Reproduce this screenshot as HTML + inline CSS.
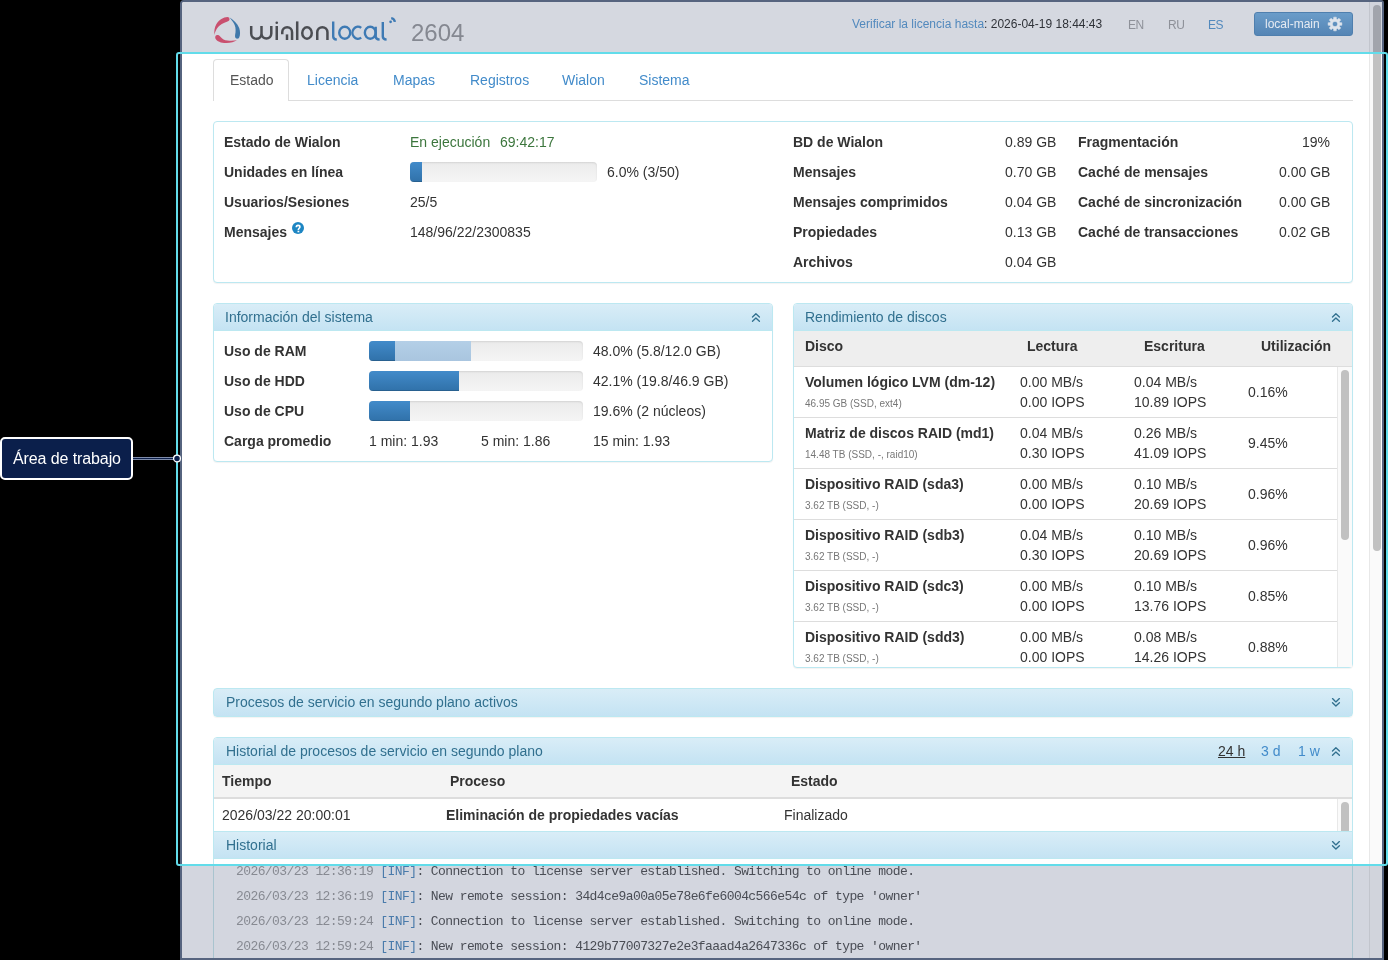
<!DOCTYPE html>
<html><head><meta charset="utf-8">
<style>
*{box-sizing:border-box}
html,body{margin:0;padding:0}
body{width:1388px;height:960px;background:#000;position:relative;overflow:hidden;font-family:"Liberation Sans",sans-serif;font-size:14px;color:#333}
.a{position:absolute}
.t{position:absolute;white-space:nowrap;line-height:1;will-change:transform}
.lk{color:#428bca}
.ph{background:linear-gradient(#d9edf7,#c4e3f3)}
.pn{position:absolute;border:1px solid #bce8f1;border-radius:4px;background:#fff;box-shadow:0 1px 1px rgba(0,0,0,.05)}
.bar{position:absolute;height:20px;border-radius:4px;background:linear-gradient(#ebebeb,#f5f5f5);box-shadow:inset 0 1px 2px rgba(0,0,0,.1);overflow:hidden}
.fill{position:absolute;left:0;top:0;height:20px;background:linear-gradient(#428bca,#3071a9);box-shadow:inset 0 -1px 0 rgba(0,0,0,.15)}
.fill2{position:absolute;left:0;top:0;height:20px;background:linear-gradient(#b4cfe7,#a9c5df)}
.mono{font-family:"Liberation Mono",monospace;font-size:13px;letter-spacing:-0.585px}
</style></head><body>
<div class="a" style="left:180px;top:0px;width:1204px;height:960px;border:2px solid #56647f;border-radius:4px 3px 0 0;background:#fff"></div>
<div class="a" style="left:182px;top:2px;width:1187px;height:52px;background:#d5d8e0;border-top-left-radius:2px"></div>
<div class="a" style="left:1369px;top:2px;width:13px;height:956px;background:#fafafa;border-left:1px solid #e8e8e8"></div>
<div class="a" style="left:1373px;top:5px;width:8px;height:546px;background:#c1c1c1;border-radius:4px"></div>
<div class="a" style="left:1369px;top:2px;width:13px;height:52px;background:rgba(8,26,73,0.17)"></div>
<div class="a" style="left:1369px;top:866px;width:13px;height:92px;background:rgba(8,26,73,0.17)"></div>
<svg class="a" style="left:210px;top:13px" width="34" height="34" viewBox="0 0 34 34">
<path d="M17.5 4 C13.5 4.3 9 6.5 6.2 11.4 C4.6 14 4 18 4.4 21.9 C5 19 6.2 16.2 8.1 14 C10 11.8 13 9.9 17.5 8.4 C19 7.9 19.6 7 19.5 6 C19.4 4.8 18.6 4 17.5 4 Z" fill="#c9506f"/>
<path d="M7.4 22 C5.6 22 4.8 23.8 5.4 25.4 C6.8 28.2 11 30 16 30.1 C20.5 30.2 24.5 28.8 26.9 27.3 C24 27.7 20.5 27.8 17.5 27.5 C14.5 27.1 12.3 26.2 10.4 23.7 C9.6 22.6 8.6 22 7.4 22 Z" fill="#c9506f"/>
<path d="M19.4 4.2 C23.5 6.8 27.5 10.5 29.2 15 C30.3 18 30.4 22 29.2 24.6 C28.5 26 26.6 26.2 25.6 25 C24.6 23.8 25.2 21.5 25.5 19.5 C25.9 16 25.4 12.5 23.5 9.8 C22.5 8.2 21 6.5 19.4 4.2 Z" fill="#3f78aa"/>
</svg>
<svg class="a" style="left:246px;top:16px" width="156" height="28" viewBox="0 0 156 28">
<g fill="none" stroke="#4b4d52" stroke-width="2.5" stroke-linecap="butt">
<path d="M5.2 10 V17.6 A5.15 5.15 0 0 0 15.5 17.6 V10 M15.5 17.6 A4.9 4.9 0 0 0 25.3 17.6 V10"/>
<path d="M30.75 10 V24"/>
<path d="M36.25 18.3 V16.15 A4.9 4.9 0 0 1 46.05 16.15 V24"/>
<path d="M41 18.4 V24"/>
<path d="M51.2 5.4 V24"/>
<ellipse cx="61" cy="17" rx="4.75" ry="5.75"/>
<path d="M71.25 24 V16.35 A5.1 5.1 0 0 1 81.45 16.35 V24"/>
</g>
<circle cx="30.75" cy="6.7" r="1.3" fill="#4b4d52"/>
<g fill="none" stroke="#3e7ab4" stroke-width="2.4">
<path d="M87.2 5.5 V20.5 C87.2 22.6 88.4 23.4 90.8 23.6"/>
<ellipse cx="98.75" cy="16.75" rx="5.5" ry="6"/>
<path d="M115.2 11.9 A5.5 6 0 1 0 115.2 21.6"/>
<ellipse cx="124.25" cy="16.75" rx="5.4" ry="6"/>
<path d="M129.7 10.75 V20.5 C129.7 22.6 130.9 23.4 133.6 23.6"/>
<path d="M136.8 6 V20.5 C136.8 22.6 138 23.4 140.6 23.6"/>
<path d="M145.2 2.1 Q148.3 2.5 148.9 5.9"/>
</g>
<circle cx="144.6" cy="5.8" r="1.35" fill="#3e7ab4"/>
</svg>
<div class="t" style="left:411px;top:21.00px;font-size:24px;color:#858891">2604</div>
<div class="t" style="left:852px;top:18.00px;font-size:12px;color:#2f3238"><span style="color:#5289bd">Verificar la licencia hasta</span>: 2026-04-19 18:44:43</div>
<div class="t" style="left:1127.5px;top:19.00px;font-size:12px;color:#8e9199;letter-spacing:-0.4px">EN</div>
<div class="t" style="left:1167.5px;top:19.00px;font-size:12px;color:#8e9199;letter-spacing:-0.4px">RU</div>
<div class="t" style="left:1208.3px;top:19.00px;font-size:12px;color:#5289bd;letter-spacing:-0.4px">ES</div>
<div class="a" style="left:1254px;top:12px;width:99px;height:24px;border:1px solid #4f7fae;border-radius:3px;background:linear-gradient(#6a9cc9,#5585b5)"></div>
<div class="t" style="left:1265px;top:18.00px;font-size:12px;color:#e6ebf2">local-main</div>
<svg class="a" style="left:1327px;top:16px" width="16" height="16" viewBox="0 0 16 16"><path fill="#dfe4ec" fill-rule="evenodd" stroke="#dfe4ec" stroke-width="0.5" stroke-linejoin="round" d="M12.92 6.64 L14.87 6.68 L14.87 9.32 L12.92 9.36 L12.44 10.51 L13.80 11.93 L11.93 13.80 L10.51 12.44 L9.36 12.92 L9.32 14.87 L6.68 14.87 L6.64 12.92 L5.49 12.44 L4.07 13.80 L2.20 11.93 L3.56 10.51 L3.08 9.36 L1.13 9.32 L1.13 6.68 L3.08 6.64 L3.56 5.49 L2.20 4.07 L4.07 2.20 L5.49 3.56 L6.64 3.08 L6.68 1.13 L9.32 1.13 L9.36 3.08 L10.51 3.56 L11.93 2.20 L13.80 4.07 L12.44 5.49Z M8 5.4 A2.6 2.6 0 1 0 8.01 5.4Z"/></svg>
<div class="a" style="left:289px;top:100px;width:1064px;height:1px;background:#ddd"></div>
<div class="a" style="left:213px;top:59px;width:76px;height:42px;border:1px solid #ddd;border-bottom:none;border-radius:4px 4px 0 0;background:#fff"></div>
<div class="t" style="left:229.6px;top:73.00px;color:#555">Estado</div>
<div class="t" style="left:307px;top:73.00px;color:#428bca">Licencia</div>
<div class="t" style="left:393.2px;top:73.00px;color:#428bca">Mapas</div>
<div class="t" style="left:469.5px;top:73.00px;color:#428bca">Registros</div>
<div class="t" style="left:562px;top:73.00px;color:#428bca">Wialon</div>
<div class="t" style="left:638.8px;top:73.00px;color:#428bca">Sistema</div>
<div class="a" style="left:213px;top:121px;width:1140px;height:162px;border:1px solid #bce8f1;border-radius:4px;background:#fff;box-shadow:0 1px 1px rgba(0,0,0,.05)"></div>
<div class="t" style="left:224px;top:135.00px;font-weight:bold">Estado de Wialon</div>
<div class="t" style="left:224px;top:165.00px;font-weight:bold">Unidades en línea</div>
<div class="t" style="left:224px;top:195.00px;font-weight:bold">Usuarios/Sesiones</div>
<div class="t" style="left:224px;top:225.00px;font-weight:bold">Mensajes</div>
<svg class="a" style="left:292px;top:222px" width="12" height="12" viewBox="0 0 12 12"><circle cx="6" cy="6" r="6" fill="#1d86c3"/><path d="M4.3 5.2 C4.3 4 5.1 3.4 6.1 3.4 C7.2 3.4 7.9 4.1 7.9 5 C7.9 6.2 6.4 6.3 6.4 7.6 V8" fill="none" stroke="#fff" stroke-width="1.6"/><rect x="5.5" y="8.7" width="1.8" height="1.6" fill="#fff"/></svg>
<div class="t" style="left:410px;top:135.00px;color:#3c763d">En ejecución</div>
<div class="t" style="left:500.4px;top:135.00px;color:#3c763d">69:42:17</div>
<div class="bar" style="left:410px;top:162px;width:187px"><div class="fill" style="width:12px"></div></div>
<div class="t" style="left:606.6px;top:165.00px">6.0% (3/50)</div>
<div class="t" style="left:410px;top:195.00px">25/5</div>
<div class="t" style="left:410px;top:225.00px">148/96/22/2300835</div>
<div class="t" style="left:793px;top:135.00px;font-weight:bold">BD de Wialon</div>
<div class="t" style="right:332px;top:135.00px">0.89 GB</div>
<div class="t" style="left:793px;top:165.00px;font-weight:bold">Mensajes</div>
<div class="t" style="right:332px;top:165.00px">0.70 GB</div>
<div class="t" style="left:793px;top:195.00px;font-weight:bold">Mensajes comprimidos</div>
<div class="t" style="right:332px;top:195.00px">0.04 GB</div>
<div class="t" style="left:793px;top:225.00px;font-weight:bold">Propiedades</div>
<div class="t" style="right:332px;top:225.00px">0.13 GB</div>
<div class="t" style="left:793px;top:255.00px;font-weight:bold">Archivos</div>
<div class="t" style="right:332px;top:255.00px">0.04 GB</div>
<div class="t" style="left:1078px;top:135.00px;font-weight:bold">Fragmentación</div>
<div class="t" style="right:58px;top:135.00px">19%</div>
<div class="t" style="left:1078px;top:165.00px;font-weight:bold">Caché de mensajes</div>
<div class="t" style="right:58px;top:165.00px">0.00 GB</div>
<div class="t" style="left:1078px;top:195.00px;font-weight:bold">Caché de sincronización</div>
<div class="t" style="right:58px;top:195.00px">0.00 GB</div>
<div class="t" style="left:1078px;top:225.00px;font-weight:bold">Caché de transacciones</div>
<div class="t" style="right:58px;top:225.00px">0.02 GB</div>
<div class="a" style="left:213px;top:303px;width:560px;height:159px;border:1px solid #bce8f1;border-radius:4px;background:#fff;box-shadow:0 1px 1px rgba(0,0,0,.05);overflow:hidden"></div>
<div class="a" style="left:214px;top:304px;width:558px;height:27px;background:linear-gradient(#d9edf7,#c4e3f3);border-bottom:1px solid #bce8f1;border-radius:3px 3px 0 0"></div>
<div class="t" style="left:225px;top:310.00px;color:#31708f">Información del sistema</div>
<svg class="a" style="left:751px;top:312px" width="10" height="11" viewBox="0 0 10 11"><path d="M1.5 5 L4.9 1.7 L8.4 5 M1.5 9.2 L4.9 5.9 L8.4 9.2" fill="none" stroke="#31708f" stroke-width="1.35" stroke-linecap="round" stroke-linejoin="round"/></svg>
<div class="t" style="left:224px;top:344.00px;font-weight:bold">Uso de RAM</div>
<div class="t" style="left:224px;top:374.00px;font-weight:bold">Uso de HDD</div>
<div class="t" style="left:224px;top:404.00px;font-weight:bold">Uso de CPU</div>
<div class="t" style="left:224px;top:434.00px;font-weight:bold">Carga promedio</div>
<div class="bar" style="left:369px;top:341px;width:214px"><div class="fill2" style="width:102px"></div><div class="fill" style="width:26px"></div></div>
<div class="bar" style="left:369px;top:371px;width:214px"><div class="fill" style="width:90px"></div></div>
<div class="bar" style="left:369px;top:401px;width:214px"><div class="fill" style="width:41px"></div></div>
<div class="t" style="left:593px;top:344.00px">48.0% (5.8/12.0 GB)</div>
<div class="t" style="left:593px;top:374.00px">42.1% (19.8/46.9 GB)</div>
<div class="t" style="left:593px;top:404.00px">19.6% (2 núcleos)</div>
<div class="t" style="left:369px;top:434.00px">1 min: 1.93</div>
<div class="t" style="left:480.5px;top:434.00px">5 min: 1.86</div>
<div class="t" style="left:593px;top:434.00px">15 min: 1.93</div>
<div class="a" style="left:793px;top:303px;width:560px;height:365px;border:1px solid #bce8f1;border-radius:4px;background:#fff;box-shadow:0 1px 1px rgba(0,0,0,.05);overflow:hidden"></div>
<div class="a" style="left:794px;top:304px;width:558px;height:27px;background:linear-gradient(#d9edf7,#c4e3f3);border-bottom:1px solid #bce8f1;border-radius:3px 3px 0 0"></div>
<div class="t" style="left:805px;top:310.00px;color:#31708f">Rendimiento de discos</div>
<svg class="a" style="left:1331px;top:312px" width="10" height="11" viewBox="0 0 10 11"><path d="M1.5 5 L4.9 1.7 L8.4 5 M1.5 9.2 L4.9 5.9 L8.4 9.2" fill="none" stroke="#31708f" stroke-width="1.35" stroke-linecap="round" stroke-linejoin="round"/></svg>
<div class="a" style="left:794px;top:331px;width:558px;height:36px;background:#eee;border-bottom:1px solid #ddd"></div>
<div class="t" style="left:805px;top:339.00px;font-weight:bold">Disco</div>
<div class="t" style="left:1026.5px;top:339.00px;font-weight:bold">Lectura</div>
<div class="t" style="left:1144.4px;top:339.00px;font-weight:bold">Escritura</div>
<div class="t" style="left:1261.4px;top:339.00px;font-weight:bold">Utilización</div>
<div class="a" style="left:794px;top:417px;width:543px;height:1px;background:#ddd"></div>
<div class="t" style="left:805px;top:375.00px;font-weight:bold">Volumen lógico LVM (dm-12)</div>
<div class="t" style="left:805px;top:399.00px;font-size:10px;color:#777">46.95 GB (SSD, ext4)</div>
<div class="t" style="left:1020.3px;top:375.00px">0.00 MB/s</div>
<div class="t" style="left:1020.3px;top:395.00px">0.00 IOPS</div>
<div class="t" style="left:1134.3px;top:375.00px">0.04 MB/s</div>
<div class="t" style="left:1134.3px;top:395.00px">10.89 IOPS</div>
<div class="t" style="left:1248px;top:385.00px">0.16%</div>
<div class="a" style="left:794px;top:468px;width:543px;height:1px;background:#ddd"></div>
<div class="t" style="left:805px;top:426.00px;font-weight:bold">Matriz de discos RAID (md1)</div>
<div class="t" style="left:805px;top:450.00px;font-size:10px;color:#777">14.48 TB (SSD, -, raid10)</div>
<div class="t" style="left:1020.3px;top:426.00px">0.04 MB/s</div>
<div class="t" style="left:1020.3px;top:446.00px">0.30 IOPS</div>
<div class="t" style="left:1134.3px;top:426.00px">0.26 MB/s</div>
<div class="t" style="left:1134.3px;top:446.00px">41.09 IOPS</div>
<div class="t" style="left:1248px;top:436.00px">9.45%</div>
<div class="a" style="left:794px;top:519px;width:543px;height:1px;background:#ddd"></div>
<div class="t" style="left:805px;top:477.00px;font-weight:bold">Dispositivo RAID (sda3)</div>
<div class="t" style="left:805px;top:501.00px;font-size:10px;color:#777">3.62 TB (SSD, -)</div>
<div class="t" style="left:1020.3px;top:477.00px">0.00 MB/s</div>
<div class="t" style="left:1020.3px;top:497.00px">0.00 IOPS</div>
<div class="t" style="left:1134.3px;top:477.00px">0.10 MB/s</div>
<div class="t" style="left:1134.3px;top:497.00px">20.69 IOPS</div>
<div class="t" style="left:1248px;top:487.00px">0.96%</div>
<div class="a" style="left:794px;top:570px;width:543px;height:1px;background:#ddd"></div>
<div class="t" style="left:805px;top:528.00px;font-weight:bold">Dispositivo RAID (sdb3)</div>
<div class="t" style="left:805px;top:552.00px;font-size:10px;color:#777">3.62 TB (SSD, -)</div>
<div class="t" style="left:1020.3px;top:528.00px">0.04 MB/s</div>
<div class="t" style="left:1020.3px;top:548.00px">0.30 IOPS</div>
<div class="t" style="left:1134.3px;top:528.00px">0.10 MB/s</div>
<div class="t" style="left:1134.3px;top:548.00px">20.69 IOPS</div>
<div class="t" style="left:1248px;top:538.00px">0.96%</div>
<div class="a" style="left:794px;top:621px;width:543px;height:1px;background:#ddd"></div>
<div class="t" style="left:805px;top:579.00px;font-weight:bold">Dispositivo RAID (sdc3)</div>
<div class="t" style="left:805px;top:603.00px;font-size:10px;color:#777">3.62 TB (SSD, -)</div>
<div class="t" style="left:1020.3px;top:579.00px">0.00 MB/s</div>
<div class="t" style="left:1020.3px;top:599.00px">0.00 IOPS</div>
<div class="t" style="left:1134.3px;top:579.00px">0.10 MB/s</div>
<div class="t" style="left:1134.3px;top:599.00px">13.76 IOPS</div>
<div class="t" style="left:1248px;top:589.00px">0.85%</div>
<div class="t" style="left:805px;top:630.00px;font-weight:bold">Dispositivo RAID (sdd3)</div>
<div class="t" style="left:805px;top:654.00px;font-size:10px;color:#777">3.62 TB (SSD, -)</div>
<div class="t" style="left:1020.3px;top:630.00px">0.00 MB/s</div>
<div class="t" style="left:1020.3px;top:650.00px">0.00 IOPS</div>
<div class="t" style="left:1134.3px;top:630.00px">0.08 MB/s</div>
<div class="t" style="left:1134.3px;top:650.00px">14.26 IOPS</div>
<div class="t" style="left:1248px;top:640.00px">0.88%</div>
<div class="a" style="left:1337px;top:367px;width:15px;height:300px;background:#fafafa;border-left:1px solid #e8e8e8"></div>
<div class="a" style="left:1341px;top:370px;width:8px;height:170px;background:#c1c1c1;border-radius:4px"></div>
<div class="a" style="left:213px;top:688px;width:1140px;height:29px;border:1px solid #bce8f1;border-radius:4px;background:linear-gradient(#d9edf7,#c4e3f3);box-shadow:0 1px 1px rgba(0,0,0,.05)"></div>
<div class="t" style="left:225.5px;top:695.00px;color:#31708f">Procesos de servicio en segundo plano activos</div>
<svg class="a" style="left:1331px;top:697px" width="10" height="11" viewBox="0 0 10 11"><path d="M1.5 1.6 L4.9 4.9 L8.4 1.6 M1.5 5.8 L4.9 9.1 L8.4 5.8" fill="none" stroke="#31708f" stroke-width="1.35" stroke-linecap="round" stroke-linejoin="round"/></svg>
<div class="a" style="left:213px;top:737px;width:1140px;height:240px;border:1px solid #bce8f1;border-radius:4px;background:#fff"></div>
<div class="a" style="left:214px;top:738px;width:1138px;height:27px;background:linear-gradient(#d9edf7,#c4e3f3);border-bottom:1px solid #bce8f1;border-radius:3px 3px 0 0"></div>
<div class="t" style="left:225.5px;top:744.00px;color:#31708f">Historial de procesos de servicio en segundo plano</div>
<div class="t" style="left:1218.4px;top:744.00px;color:#333;text-decoration:underline">24 h</div>
<div class="t" style="left:1261px;top:744.00px;color:#428bca">3 d</div>
<div class="t" style="left:1297.6px;top:744.00px;color:#428bca">1 w</div>
<svg class="a" style="left:1331px;top:746px" width="10" height="11" viewBox="0 0 10 11"><path d="M1.5 5 L4.9 1.7 L8.4 5 M1.5 9.2 L4.9 5.9 L8.4 9.2" fill="none" stroke="#31708f" stroke-width="1.35" stroke-linecap="round" stroke-linejoin="round"/></svg>
<div class="a" style="left:214px;top:765px;width:1138px;height:34px;background:#f4f4f4;border-bottom:2px solid #ddd"></div>
<div class="t" style="left:222px;top:774.00px;font-weight:bold">Tiempo</div>
<div class="t" style="left:450px;top:774.00px;font-weight:bold">Proceso</div>
<div class="t" style="left:790.8px;top:774.00px;font-weight:bold">Estado</div>
<div class="t" style="left:222.3px;top:808.00px">2026/03/22 20:00:01</div>
<div class="t" style="left:446.4px;top:808.00px;font-weight:bold">Eliminación de propiedades vacías</div>
<div class="t" style="left:783.5px;top:808.00px">Finalizado</div>
<div class="a" style="left:1337px;top:799px;width:15px;height:32px;background:#fafafa;border-left:1px solid #e8e8e8"></div>
<div class="a" style="left:1341px;top:802px;width:8px;height:40px;background:#c1c1c1;border-radius:4px"></div>
<div class="a" style="left:213px;top:831px;width:1140px;height:28px;border:1px solid #bce8f1;border-bottom:1px solid #bce8f1;background:linear-gradient(#d9edf7,#c4e3f3)"></div>
<div class="t" style="left:225.8px;top:838.00px;color:#31708f">Historial</div>
<svg class="a" style="left:1331px;top:840px" width="10" height="11" viewBox="0 0 10 11"><path d="M1.5 1.6 L4.9 4.9 L8.4 1.6 M1.5 5.8 L4.9 9.1 L8.4 5.8" fill="none" stroke="#31708f" stroke-width="1.35" stroke-linecap="round" stroke-linejoin="round"/></svg>
<div class="a" style="left:182px;top:866px;width:1187px;height:92px;background:#d3d6df"></div>
<div class="a" style="left:213px;top:866px;width:1px;height:92px;background:#a9c4cf"></div>
<div class="a" style="left:1352px;top:866px;width:1px;height:92px;background:#a9c4cf"></div>
<div class="t mono" style="left:236.4px;top:865px;color:#4a4d55"><span style="color:#878a92">2026/03/23 12:36:19</span> <span style="color:#4a7bab">[INF]</span>: Connection to license server established. Switching to online mode.</div>
<div class="t mono" style="left:236.4px;top:890px;color:#4a4d55"><span style="color:#878a92">2026/03/23 12:36:19</span> <span style="color:#4a7bab">[INF]</span>: New remote session: 34d4ce9a00a05e78e6fe6004c566e54c of type 'owner'</div>
<div class="t mono" style="left:236.4px;top:915px;color:#4a4d55"><span style="color:#878a92">2026/03/23 12:59:24</span> <span style="color:#4a7bab">[INF]</span>: Connection to license server established. Switching to online mode.</div>
<div class="t mono" style="left:236.4px;top:940px;color:#4a4d55"><span style="color:#878a92">2026/03/23 12:59:24</span> <span style="color:#4a7bab">[INF]</span>: New remote session: 4129b77007327e2e3faaad4a2647336c of type 'owner'</div>
<div class="a" style="left:180px;top:958px;width:1204px;height:2px;background:#56647f"></div>
<div class="a" style="left:176px;top:52px;width:1212px;height:814px;border:2px solid #62dcea;border-radius:3px"></div>
<div class="a" style="left:0px;top:437px;width:133px;height:43px;background:#0b1f4b;border:2px solid #fff;border-radius:5px"></div>
<div class="t" style="left:13px;top:451px;font-size:16px;color:#fff;letter-spacing:-0.1px">Área de trabajo</div>
<div class="a" style="left:133px;top:457px;width:44px;height:3px;background:#0c1f4a;border-top:1px solid #7f8cab;border-bottom:1px solid #7f8cab"></div>
<svg class="a" style="left:171px;top:452px" width="12" height="13" viewBox="0 0 12 13"><circle cx="6" cy="6.5" r="3.4" fill="#0b1f4b" stroke="#fff" stroke-width="1.3"/></svg>
</body></html>
